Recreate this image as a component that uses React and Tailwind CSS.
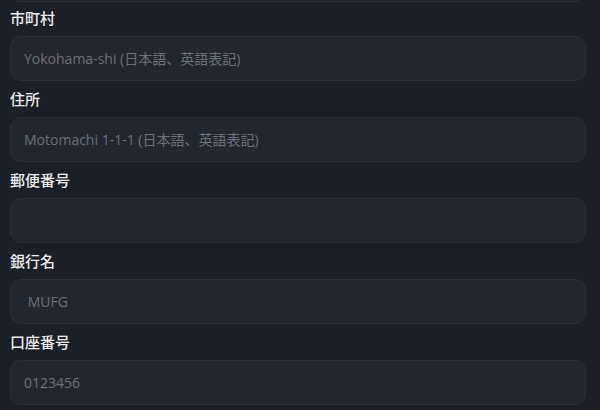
const FIELDS = [
  { label: '市町村', placeholder: 'Yokohama-shi (日本語、英語表記)' },
  { label: '住所', placeholder: 'Motomachi 1-1-1 (日本語、英語表記)' },
  { label: '郵便番号', placeholder: '' },
  { label: '銀行名', placeholder: ' MUFG' },
  { label: '口座番号', placeholder: '0123456' },
]

function Field({ label, placeholder }) {
  return (
    <div className="flex flex-col">
      <label className="text-[15px] leading-[20px] font-medium text-[#ececec]">
        {label}
      </label>
      <div className="mt-2 h-[45px] rounded-[11px] border border-[#2b3039] bg-[#22262f] px-[13px] flex items-center">
        <span
          className="text-[14px] text-[#6d7178] whitespace-pre"
          style={{ fontFamily: '"Open Sans", "Noto Sans CJK JP", sans-serif' }}
        >
          {placeholder}
        </span>
      </div>
    </div>
  )
}

export default function App() {
  return (
    <div
      className="w-[600px] h-[410px] overflow-hidden bg-[#1b1f28]"
      style={{ fontFamily: '"Noto Sans CJK JP", sans-serif' }}
    >
      <div className="ml-4 mr-[21px] h-[2px] rounded-b-[10px] border-b border-[#2b3039] bg-[#22262f]" />
      <div className="flex flex-col gap-2 pt-[6px] pl-[10px] pr-[14px]">
        {FIELDS.map((f) => (
          <Field key={f.label} {...f} />
        ))}
      </div>
    </div>
  )
}
